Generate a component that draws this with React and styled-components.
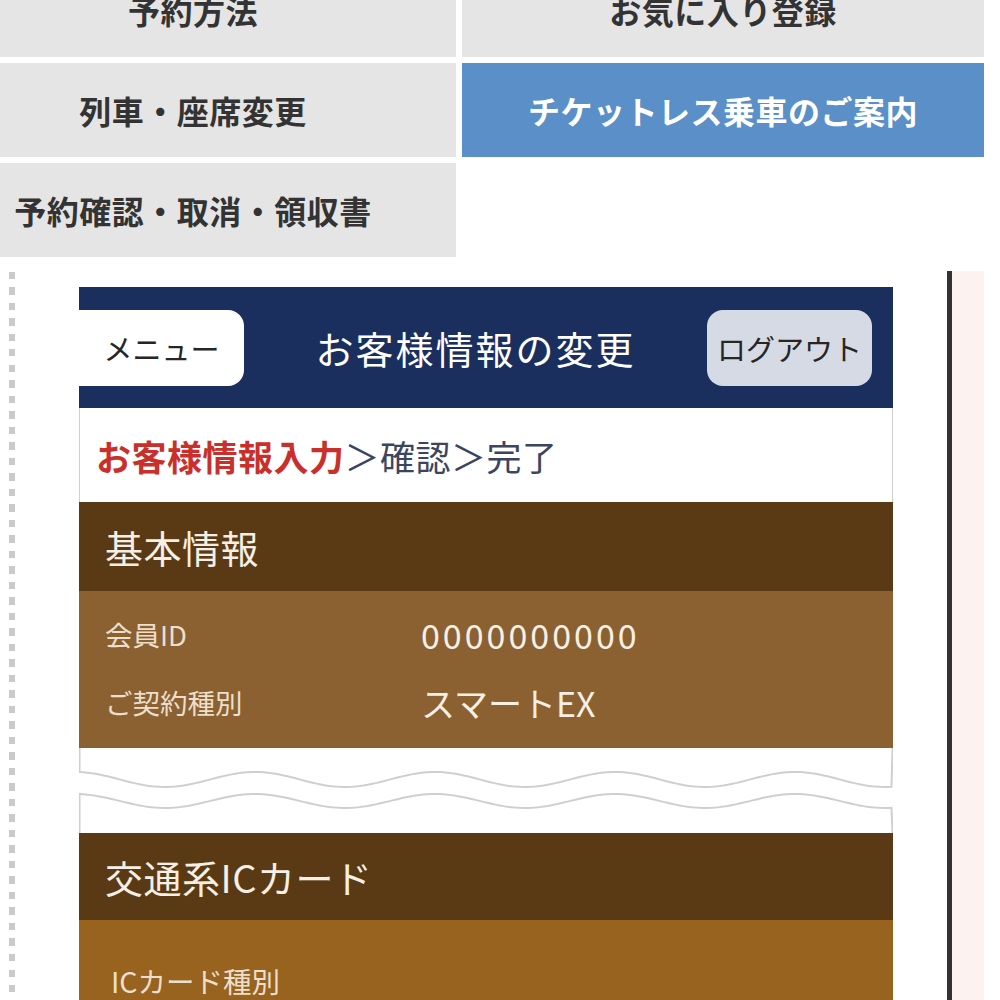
import React from 'react';
import styled, { createGlobalStyle } from 'styled-components';

const GlobalStyle = createGlobalStyle`
	body {
		margin: 0;
		background: #ffffff;
		font-family: "Noto Sans CJK JP", "Noto Sans", sans-serif;
	}
`;

const Page = styled.div`
	width: 1000px;
	overflow: hidden;
`;

const NavGrid = styled.div`
	display: grid;
	grid-template-columns: 456px 522px;
	grid-auto-rows: 94px;
	gap: 6px;
	margin-top: -37px;
`;

const NavCell = styled.div`
	display: flex;
	align-items: center;
	justify-content: center;
	padding-right: ${(p) => (p.left ? '70px' : '0')};
	background: ${(p) => (p.active ? '#5a8fc8' : '#e5e5e5')};
	color: ${(p) => (p.active ? '#ffffff' : '#333333')};
	font-size: 32px;
	font-weight: bold;
	letter-spacing: 0.5px;
`;

const Blank = styled.div``;

const Content = styled.div`
	display: flex;
	padding-top: 14px;
`;

const DottedRail = styled.div`
	width: 6px;
	margin: 1px 0 0 9px;
	background: repeating-linear-gradient(to bottom, #cacaca 0 7px, transparent 7px 15.5px);
`;

const Card = styled.div`
	flex-shrink: 0;
	width: 814px;
	margin: 16px 0 0 64px;
`;

const SidePanel = styled.div`
	width: 32px;
	margin-left: 54px;
	border-left: 5px solid #333333;
	background: #fcf3f1;
`;

const Header = styled.div`
	display: flex;
	align-items: center;
	height: 121px;
	padding-right: 21px;
	background: #1b2f5f;
`;

const HeaderButton = styled.div`
	display: flex;
	align-items: center;
	justify-content: center;
	width: 165px;
	height: 76px;
	border-radius: ${(p) => (p.flush ? '0 16px 16px 0' : '16px')};
	background: ${(p) => (p.flush ? '#ffffff' : '#d5dae4')};
	color: #262626;
	font-size: 29px;
`;

const Title = styled.div`
	flex: 1;
	text-align: center;
	color: #ffffff;
	font-size: 38px;
	letter-spacing: 2px;
`;

const Steps = styled.div`
	display: flex;
	align-items: center;
	height: 94px;
	padding-left: 16px;
	background: #ffffff;
	border-left: 1px solid #cfcfcf;
	border-right: 1px solid #cfcfcf;
	font-size: 35px;
	letter-spacing: 0.5px;
	color: #3b4560;
`;

const CurrentStep = styled.span`
	color: #c9302c;
	font-weight: bold;
`;

const SectionHead = styled.div`
	display: flex;
	align-items: center;
	height: ${(p) => p.h}px;
	padding-left: 26px;
	background: #5a3a14;
	color: #f5efe6;
	font-size: 38px;
	letter-spacing: 0.5px;
`;

const Rows = styled.div`
	padding: ${(p) => p.pad};
	background: ${(p) => p.bg};
`;

const Row = styled.div`
	display: flex;
	align-items: center;
	height: 68px;
	padding-left: ${(p) => p.indent || 26}px;
`;

const Label = styled.div`
	width: 316px;
	color: #ecdfcc;
	font-size: ${(p) => p.size || 27.5}px;
`;

const Value = styled.div`
	color: #f6efe6;
	font-size: 34px;
	letter-spacing: ${(p) => (p.spaced ? '3px' : '0')};
`;

const TearSvg = styled.svg`
	display: block;
`;

const wave = (mid, amp, from, to) => {
	const pts = [];
	for (let x = from; x <= to; x += 4) {
		const y = mid - amp * Math.cos((2 * Math.PI * (x + 4)) / 180);
		pts.push(`${x.toFixed(1)},${y.toFixed(2)}`);
	}
	return pts;
};

const Tear = () => {
	const W = 814;
	const top = wave(31.5, 7.5, 0.5, W - 0.5);
	const bottom = wave(53, 7, 0.5, W - 0.5);
	const topLast = top[top.length - 1].split(',')[1];
	const bottomFirst = bottom[0].split(',')[1];
	return (
		<TearSvg width={W} height="85" viewBox={`0 0 ${W} 85`}>
			<polygon points={`0,0 ${top.join(' ')} ${W},${topLast} ${W},0`} fill="#ffffff" />
			<polyline
				points={`0.5,0 ${top.join(' ')} ${W - 0.5},0`}
				fill="none"
				stroke="#cfcfcf"
				strokeWidth="2"
			/>
			<polygon points={`0,85 0,${bottomFirst} ${bottom.join(' ')} ${W},85`} fill="#ffffff" />
			<polyline
				points={`0.5,85 ${bottom.join(' ')} ${W - 0.5},85`}
				fill="none"
				stroke="#cfcfcf"
				strokeWidth="2"
			/>
		</TearSvg>
	);
};

const navItems = [
	{ label: '予約方法', left: true },
	{ label: 'お気に入り登録' },
	{ label: '列車・座席変更', left: true },
	{ label: 'チケットレス乗車のご案内', active: true },
	{ label: '予約確認・取消・領収書', left: true },
];

const App = () => {
	return (
		<Page>
			<GlobalStyle />
			<NavGrid>
				{navItems.map((item) => (
					<NavCell key={item.label} left={item.left} active={item.active}>
						{item.label}
					</NavCell>
				))}
				<Blank />
			</NavGrid>
			<Content>
				<DottedRail />
				<Card>
					<Header>
						<HeaderButton flush>メニュー</HeaderButton>
						<Title>お客様情報の変更</Title>
						<HeaderButton>ログアウト</HeaderButton>
					</Header>
					<Steps>
						<CurrentStep>お客様情報入力</CurrentStep>＞確認＞完了
					</Steps>
					<SectionHead h={89}>基本情報</SectionHead>
					<Rows pad="9px 0 12px" bg="#8b6131">
						<Row>
							<Label>会員ID</Label>
							<Value spaced>0000000000</Value>
						</Row>
						<Row>
							<Label>ご契約種別</Label>
							<Value>スマートEX</Value>
						</Row>
					</Rows>
					<Tear />
					<SectionHead h={87}>交通系ICカード</SectionHead>
					<Rows pad="26px 0 40px" bg="#98631f">
						<Row indent={32}>
							<Label size={28.5}>ICカード種別</Label>
						</Row>
					</Rows>
				</Card>
				<SidePanel />
			</Content>
		</Page>
	);
};

export default App;
